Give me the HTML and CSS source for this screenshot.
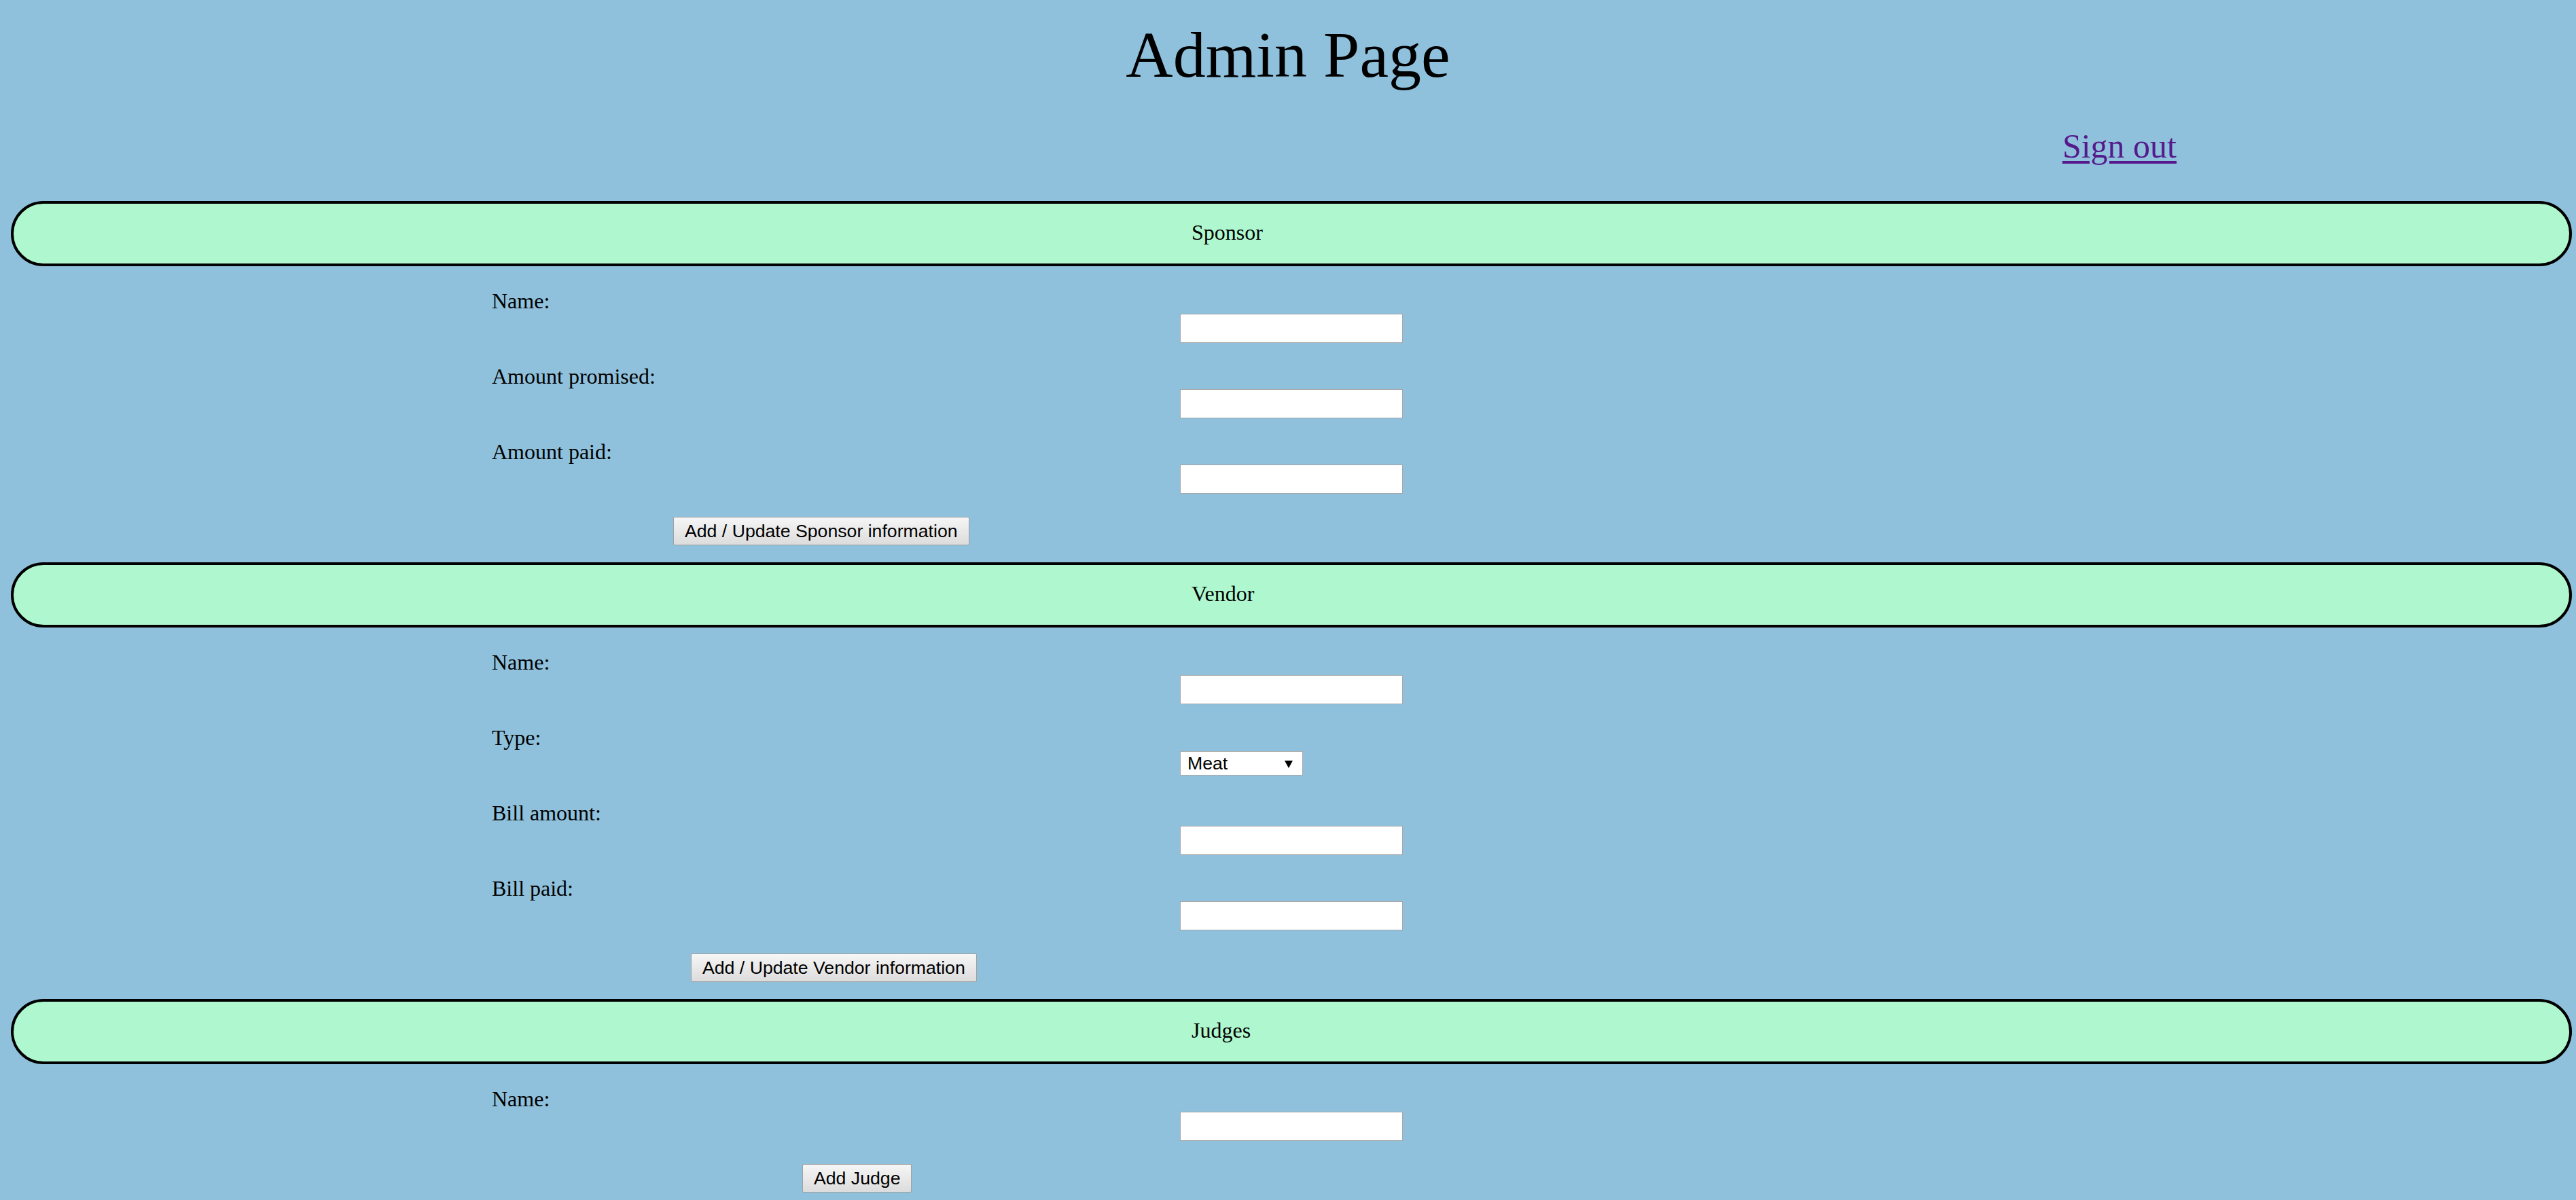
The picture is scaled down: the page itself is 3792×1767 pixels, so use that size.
FILE: index.html
```html
<!DOCTYPE html>
<html lang="en">
<head>
<meta charset="utf-8">
<title>Admin Page</title>
<link rel="stylesheet" href="styles.css">
</head>
<body>
<div class="page">
  <h1 class="title">Admin Page</h1>
  <div class="signout-row"><a class="signout" href="#">Sign out</a></div>

  <section class="section">
    <div class="bar">Sponsor</div>
    <form class="form">
      <div class="field"><label class="label">Name:</label><input class="text-input" type="text"></div>
      <div class="field"><label class="label">Amount promised:</label><input class="text-input" type="text"></div>
      <div class="field"><label class="label">Amount paid:</label><input class="text-input" type="text"></div>
      <div class="actions"><button type="button" class="btn btn-sponsor">Add / Update Sponsor information</button></div>
    </form>
  </section>

  <section class="section">
    <div class="bar">Vendor</div>
    <form class="form">
      <div class="field"><label class="label">Name:</label><input class="text-input" type="text"></div>
      <div class="field field-select"><label class="label">Type:</label>
        <span class="select-wrap"><select class="select"><option>Meat</option><option>Vegetables</option><option>Drinks</option></select></span>
      </div>
      <div class="field"><label class="label">Bill amount:</label><input class="text-input" type="text"></div>
      <div class="field"><label class="label">Bill paid:</label><input class="text-input" type="text"></div>
      <div class="actions"><button type="button" class="btn btn-vendor">Add / Update Vendor information</button></div>
    </form>
  </section>

  <section class="section">
    <div class="bar">Judges</div>
    <form class="form">
      <div class="field"><label class="label">Name:</label><input class="text-input" type="text"></div>
      <div class="actions"><button type="button" class="btn btn-judge">Add Judge</button></div>
    </form>
  </section>
</div>
</body>
</html>
```

FILE: styles.css
```css
html, body {
  margin: 0;
  padding: 0;
  background: #8fc1dc;
}

body {
  font-family: "Liberation Serif", "Times New Roman", serif;
  color: #000;
}

.page {
  padding: 0 16px;
}

.title {
  margin: 28px 0 0;
  font-size: 96px;
  line-height: 106px;
  font-weight: normal;
  text-align: center;
}

.signout-row {
  display: flex;
  justify-content: flex-end;
  padding-right: 572px;
  margin-top: 54px;
  font-size: 50px;
  line-height: 55px;
}

.signout {
  color: #551a8b;
  text-decoration: underline;
  text-decoration-thickness: 4px;
  text-underline-offset: 5px;
}

.section:first-of-type {
  margin-top: 53px;
}

.bar {
  box-sizing: border-box;
  width: calc(100% + 10px);
  height: 96px;
  border: 4px solid #000;
  border-radius: 48px;
  background: #aff8cf;
  padding: 22px 0 26px 1734px;
  font-size: 32px;
  line-height: 40px;
}

.form {
  display: flex;
  flex-direction: column;
  gap: 31px;
  padding: 33px 0 25px 708px;
  margin: 0;
}

.field {
  display: grid;
  grid-template-columns: 1013px 328px;
  align-items: start;
}

.label {
  font-size: 32px;
  line-height: 37px;
  white-space: nowrap;
}

.text-input {
  box-sizing: border-box;
  margin-top: 37px;
  width: 328px;
  height: 43px;
  border: 1px solid #a6a6a6;
  background: #fff;
  padding: 0 4px;
  font-family: "Liberation Sans", Arial, sans-serif;
  font-size: 27px;
  outline: none;
}

.select-wrap {
  position: relative;
  display: block;
  margin-top: 38px;
  margin-bottom: 6px;
  width: 181px;
  height: 36px;
}

.select {
  -webkit-appearance: none;
  appearance: none;
  box-sizing: border-box;
  width: 181px;
  height: 36px;
  border: 1px solid #a9a9a9;
  border-radius: 0;
  background: #fff;
  padding: 0 0 0 10px;
  margin: 0;
  font-family: "Liberation Sans", Arial, sans-serif;
  font-size: 26.67px;
  color: #000;
  outline: none;
}

.select-wrap::after {
  content: "";
  position: absolute;
  left: 154px;
  top: 14px;
  width: 0;
  height: 0;
  border-left: 6px solid transparent;
  border-right: 6px solid transparent;
  border-top: 11px solid #000;
  pointer-events: none;
}

.actions {
  display: flex;
  margin-top: 3px;
}

.btn {
  box-sizing: border-box;
  height: 42px;
  padding: 0 16px;
  border: 1px solid #a0a0a0;
  border-radius: 2px;
  background: linear-gradient(#f6f6f6, #dcdcdc);
  font-family: "Liberation Sans", Arial, sans-serif;
  font-size: 26.67px;
  color: #000;
  line-height: 40px;
}

.btn-sponsor { margin-left: 267px; }
.btn-vendor { margin-left: 293px; }
.btn-judge { margin-left: 457px; }
```
